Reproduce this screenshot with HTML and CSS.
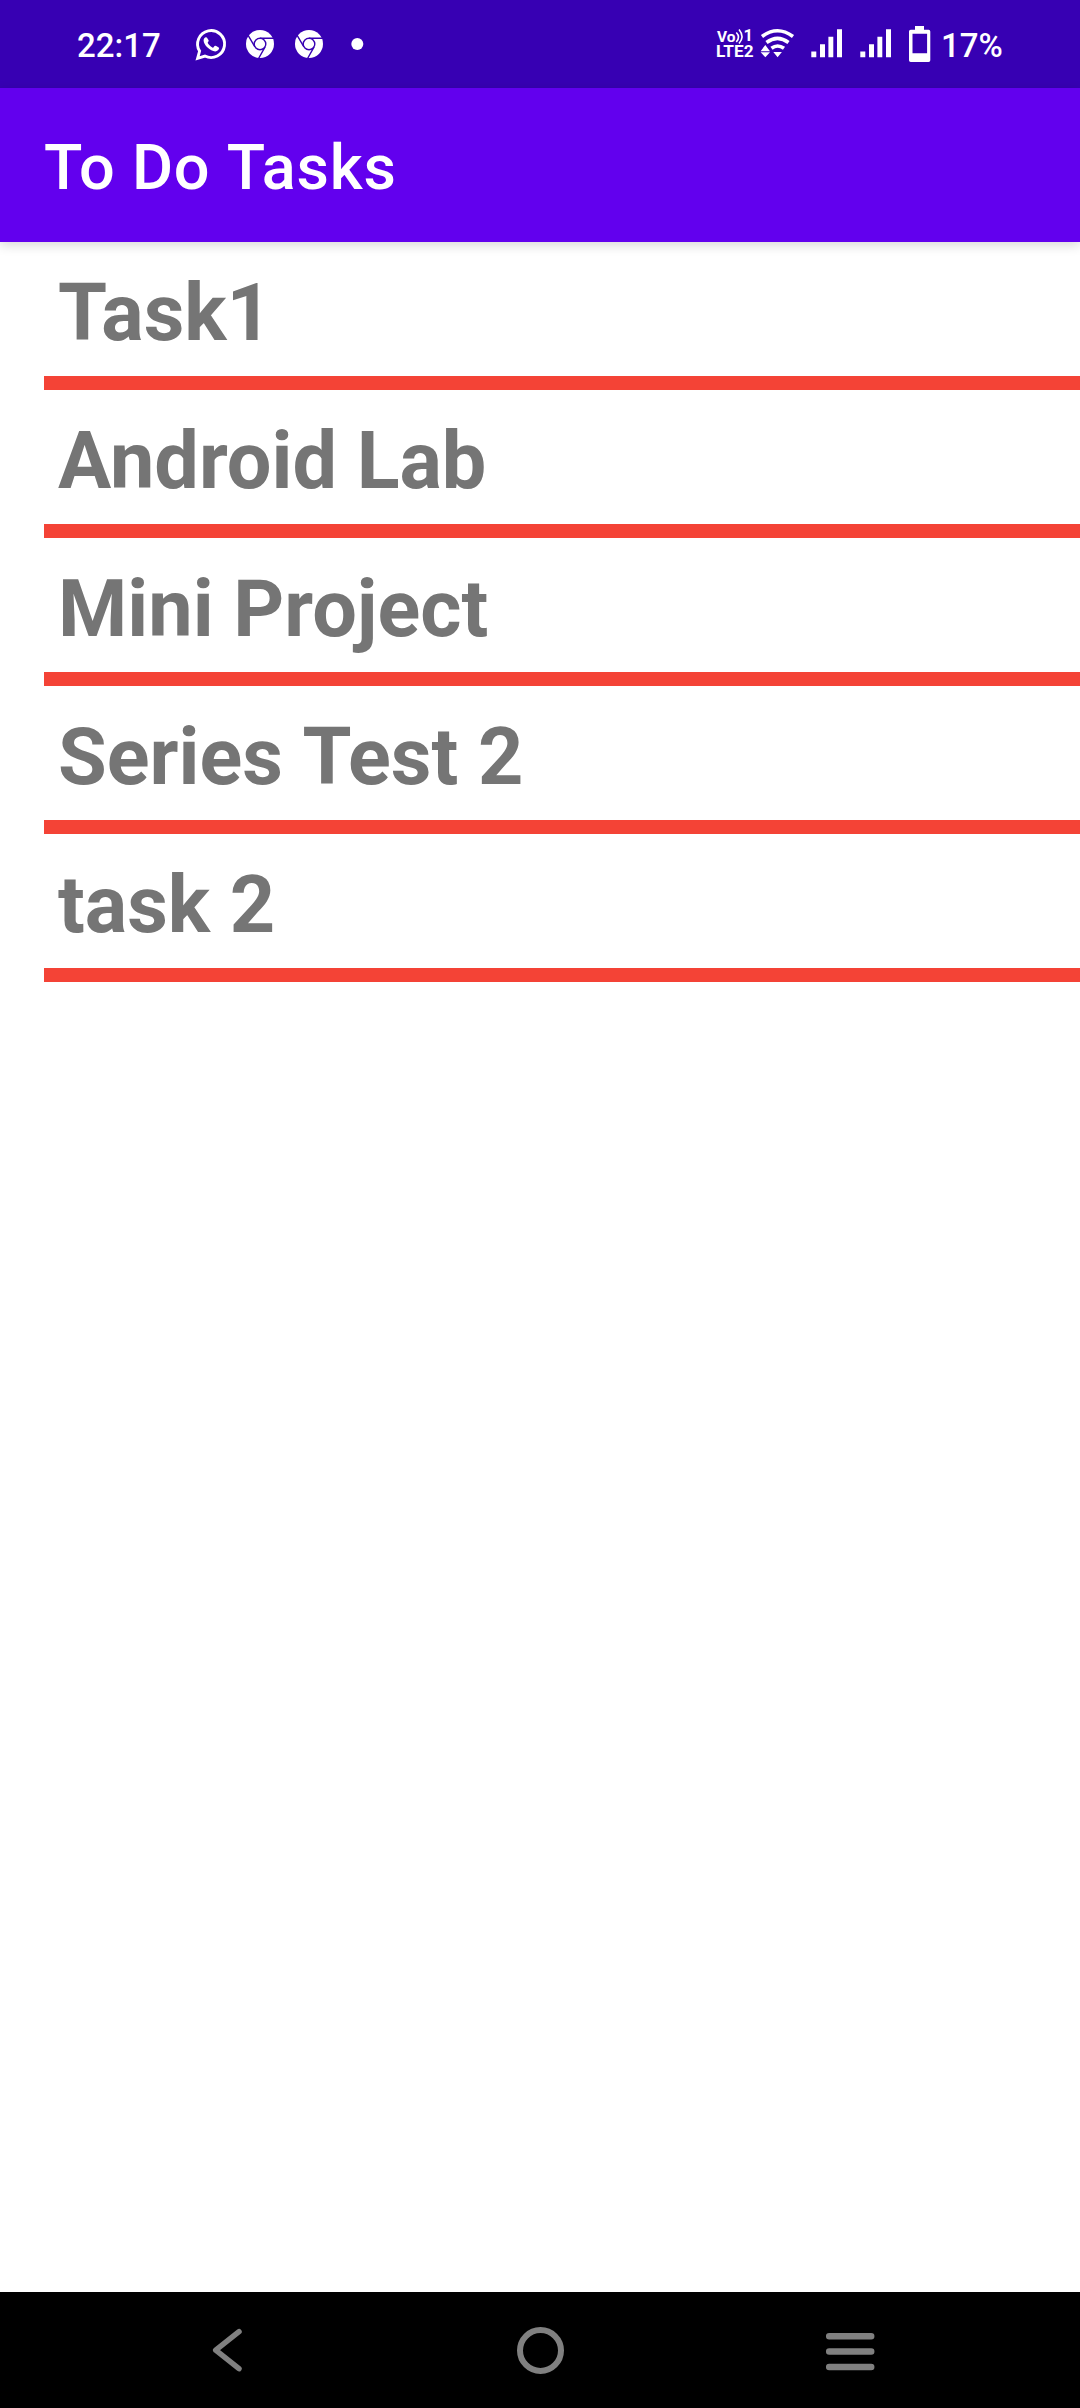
FILE: index.html
```html
<!DOCTYPE html>
<html lang="en">
<head>
<meta charset="utf-8">
<title>To Do Tasks</title>
<link rel="stylesheet" href="styles.css">
</head>
<body>
<div class="screen">
  <header class="status-bar">
    <div class="status-left">
      <span class="status-text">22:17</span>
      <svg class="status-icons" width="180" height="88" viewBox="190 0 180 88" aria-hidden="true">
        <path d="M197.600 58.400l2-7.300a13.500 13.500 0 1 1 5.300 4.900z" fill="none" stroke="#fff" stroke-width="2.900"/>
        <path d="M206.200 37.300c-1.200-.3-2.600 1.200-2.600 3.200 0 4.400 6.700 10.900 11.700 10.900 2.100 0 3.800-1.500 3.800-3.300 0-.5-3.400-2.400-4-2.300-.8.100-1.500 2-2.200 2-1.200-.2-4.700-3.400-5.200-5 0-.6 1-1.300 1-2 0-.6-1.500-3.200-2.500-3.500z" fill="#fff"/>
        <g id="chrome">
          <circle cx="260" cy="44" r="14" fill="#fff"/>
          <g fill="none" stroke="#3700b3" stroke-width="1.400">
            <circle cx="260" cy="44" r="5.800"/>
            <path d="M260 38.200h14M254.900 46.800l-6.900-11.600M265.100 46.800l-6.800 12.200"/>
          </g>
        </g>
        <use href="#chrome" x="49"/>
        <circle cx="357.300" cy="44" r="6" fill="#fff"/>
      </svg>
    </div>
    <div class="status-right">
      <svg class="status-icons" width="226" height="88" viewBox="710 0 226 88" fill="#fff" aria-hidden="true">
        <g class="volte">
          <text x="717" y="42" font-size="14.500" textLength="18.500" lengthAdjust="spacingAndGlyphs">Vo</text>
          <text x="743.500" y="41.300" font-size="16.500">1</text>
          <text x="716" y="57" font-size="16" textLength="37.500" lengthAdjust="spacingAndGlyphs">LTE2</text>
        </g>
        <path d="M736.300 32.500q4.400 4.500 0 9.500M739 29.500q6 7.200 0 14" fill="none" stroke="#fff" stroke-width="1.600"/>
        <g fill="none" stroke="#fff" stroke-width="3.600">
          <path d="M762 36.500q15.500-11.500 31 0"/>
          <path d="M766.500 42.500q11-8.200 22 0"/>
          <path d="M771.500 48.300q6-4.600 12.500 0"/>
        </g>
        <path d="M765.300 45l4.700 6.200h-9.400zM760.600 52.200h9.400l-4.700 5zM777.600 57.200l-4.300-5.200h8.600z"/>
        <path id="signal" d="M811.300 51.500h5v5.800h-5zM820 44.300h5v13h-5zM828.400 36.800h4.900v20.500h-4.900zM837 29.300h5v28h-5z"/>
        <use href="#signal" x="49"/>
        <path fill-rule="evenodd" d="M915 26h9v3.700h4.600q1.700 0 1.700 1.700v28.800q0 1.800-1.700 1.800h-17.900q-1.700 0-1.700-1.800V31.400q0-1.700 1.700-1.700h4.300zM912.500 33.700v19.500h14.600V33.700z"/>
      </svg>
      <span class="status-text">17%</span>
    </div>
  </header>
  <div class="app-bar"><h1 class="app-title">To Do <span class="word">Tasks</span></h1></div>
  <ul class="task-list">
    <li class="task">Task1</li>
    <li class="task">Android Lab</li>
    <li class="task">Mini Project</li>
    <li class="task">Series <span class="word">Test</span> 2</li>
    <li class="task">task 2</li>
  </ul>
  <nav class="nav-bar">
    <svg width="60" height="60" viewBox="0 0 60 60"><path d="M39 11.700L15.700 30.200l23.300 18.500" stroke-width="5.500"/></svg>
    <svg width="60" height="60" viewBox="0 0 60 60"><circle cx="30.500" cy="30.500" r="20.500" stroke-width="6"/></svg>
    <svg width="60" height="60" viewBox="0 0 60 60"><path d="M9.200 16.200h42M9.200 31.500h42M9.200 47h42" stroke-width="6.500"/></svg>
  </nav>
</div>
</body>
</html>
```
FILE: styles.css
```css
body {
  margin: 0;
  background: #fff;
  font-family: Roboto, "Liberation Sans", sans-serif;
}

.screen {
  display: flex;
  flex-direction: column;
  width: 1080px;
  height: 2408px;
  overflow: hidden;
}

.status-bar {
  display: flex;
  justify-content: space-between;
  height: 88px;
  padding: 0 77px;
  box-sizing: border-box;
  background: #3700b3;
}

.status-left,
.status-right {
  display: flex;
}

.status-left {
  gap: 27px;
}

.status-right {
  gap: 5px;
}

.status-text {
  color: #fff;
  font-size: 33px;
  font-weight: 500;
  line-height: 91px;
}

.status-left .status-text {
  width: 86px;
}

.status-right .status-text {
  width: 62px;
}

.status-icons {
  flex: none;
}

.volte {
  font-family: Roboto, "Liberation Sans", sans-serif;
  font-weight: 700;
}

.app-bar {
  display: flex;
  align-items: center;
  height: 154px;
  flex: none;
  padding: 5px 0 0 44px;
  box-sizing: border-box;
  background: #6200ee;
  box-shadow: 0 3px 11px rgba(0, 0, 0, 0.16);
}

.app-title {
  margin: 0;
  color: #fff;
  font-size: 63px;
  font-weight: 500;
  line-height: 74px;
  letter-spacing: 0.0125em;
}

/* Keeps each word shaped on its own, without kerning across the space. */
.word {
  display: inline-block;
}

.task-list {
  flex: 1;
  margin: 0;
  padding: 0 0 0 44px;
  list-style: none;
}

.task {
  height: 148px;
  padding: 25px 0 0 14px;
  box-sizing: border-box;
  border-bottom: 14px solid #f44336;
  color: #757575;
  font-size: 79.200px;
  font-weight: 700;
  line-height: 93px;
}

.nav-bar {
  display: flex;
  align-items: center;
  justify-content: center;
  gap: 250px;
  height: 116px;
  background: #000;
}

.nav-bar svg {
  fill: none;
  stroke: #808080;
  stroke-linecap: round;
  stroke-linejoin: round;
}
```
